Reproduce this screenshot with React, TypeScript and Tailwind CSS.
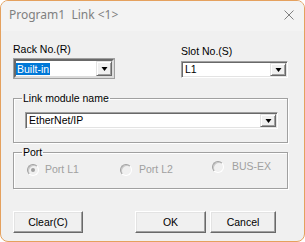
import React from "react";

function DropBtn({ h }: { h: string }) {
  return (
    <div
      className={`w-[16px] ${h} shrink-0 bg-[#f0f0f0] border border-t-[#e3e3e3] border-l-[#e3e3e3] border-r-[#696969] border-b-[#696969] shadow-[inset_1px_1px_0_#ffffff,inset_-1px_-1px_0_#a0a0a0] flex items-center justify-center`}
    >
      <div className="w-0 h-0 border-l-[3px] border-r-[3px] border-t-[4px] border-l-transparent border-r-transparent border-t-black translate-x-[0.5px]" />
    </div>
  );
}

function Combo({ w, text }: { w: string; text: string }) {
  return (
    <div
      className={`${w} h-[17px] bg-white border border-t-[#a0a0a0] border-l-[#a0a0a0] border-r-white border-b-white shadow-[inset_1px_1px_0_#696969,inset_-1px_-1px_0_#e3e3e3] p-[1px] flex`}
    >
      <div className="flex-1 flex items-center pl-[2px] text-black">{text}</div>
      <DropBtn h="h-[13px]" />
    </div>
  );
}

function Radio({ checked }: { checked?: boolean }) {
  return (
    <div className="w-[12px] h-[12px] rounded-full shrink-0 border border-t-[#a0a0a0] border-l-[#a0a0a0] border-r-white border-b-white bg-[#f0f0f0] shadow-[inset_1px_1px_0_#c8c8c8] flex items-center justify-center">
      {checked && <div className="w-[4px] h-[4px] rounded-full bg-[#a0a0a0]" />}
    </div>
  );
}

function Btn({ w, label, ml }: { w: string; label: string; ml: string }) {
  return (
    <div
      className={`${w} ${ml} h-[22px] bg-[#f0f0f0] border border-t-white border-l-white border-r-[#696969] border-b-[#696969] shadow-[inset_-1px_-1px_0_#a0a0a0,inset_1px_1px_0_#e3e3e3] flex items-center justify-center text-black`}
    >
      {label}
    </div>
  );
}

export default function App() {
  return (
    <div className="w-[305px] h-[242px] bg-white">
      <div className="w-[305px] h-[242px] border border-[#e5a15e] rounded-[8px] overflow-hidden flex flex-col bg-[#f0f0f0]">
        <div className="h-[30px] shrink-0 bg-[#f3f3f3] flex items-start pt-[6px] pl-[8px] pr-[10px]">
          <span className="font-['Noto_Sans',sans-serif] text-[12px] leading-[16px] text-[#808080] whitespace-pre">
            {"Program1  Link <1>"}
          </span>
          <svg className="ml-auto mt-[3px]" width="10" height="10" viewBox="0 0 10 10">
            <path d="M0.5 0.5 L9.5 9.5 M9.5 0.5 L0.5 9.5" stroke="#808080" strokeWidth="1" fill="none" />
          </svg>
        </div>
        <div className="flex-1 pl-[12px] pr-[16px] pt-[12px] font-['Liberation_Sans',Arial,sans-serif] text-[10.5px] leading-[13px] text-black">
          <div className="flex items-start">
            <div className="w-[104px] flex flex-col">
              <div className="h-[13px]">Rack No.(R)</div>
              <div className="mt-[2px] h-[21px] border border-[#a0a0a0] flex">
                <div className="flex-1 bg-white border-2 border-t-[#696969] border-l-[#696969] border-r-[#dcdcdc] border-b-[#dcdcdc] flex">
                  <div className="flex-1 flex items-center">
                    <span className="bg-[#0078d7] text-white px-[1px] leading-[12px]">Built-in</span>
                  </div>
                  <DropBtn h="h-[15px]" />
                </div>
              </div>
            </div>
            <div className="ml-[66px] w-[107px] flex flex-col mt-[2px]">
              <div className="h-[13px]">Slot No.(S)</div>
              <div className="mt-[3px]">
                <Combo w="w-[107px]" text="L1" />
              </div>
            </div>
          </div>

          <fieldset className="mt-[13px] w-[275px] border border-[#a0a0a0] shadow-[inset_1px_1px_0_#ffffff,1px_1px_0_#ffffff]">
            <legend className="ml-[8px] px-[1px] leading-[13px]">Link module name</legend>
            <div className="pl-[11px] pt-[7px] pb-[13px]">
              <Combo w="w-[253px]" text="EtherNet/IP" />
            </div>
          </fieldset>

          <fieldset className="mt-[3px] w-[275px] border border-[#a0a0a0] shadow-[inset_1px_1px_0_#ffffff,1px_1px_0_#ffffff]">
            <legend className="ml-[8px] px-[1px] leading-[13px]">Port</legend>
            <div className="pl-[13px] pt-[4px] pb-[12px] flex items-start text-[#a0a0a0]">
              <div className="w-[93px] flex items-center">
                <Radio checked />
                <span className="ml-[6px]">Port L1</span>
              </div>
              <div className="w-[92px] flex items-center">
                <Radio />
                <span className="ml-[7px]">Port L2</span>
              </div>
              <div className="flex items-center -mt-[3px]">
                <Radio />
                <span className="ml-[8px]">BUS-EX</span>
              </div>
            </div>
          </fieldset>

          <div className="mt-[22px] flex">
            <Btn w="w-[70px]" ml="ml-0" label="Clear(C)" />
            <Btn w="w-[71px]" ml="ml-[52px]" label="OK" />
            <Btn w="w-[66px]" ml="ml-[4px]" label="Cancel" />
          </div>
        </div>
      </div>
    </div>
  );
}
